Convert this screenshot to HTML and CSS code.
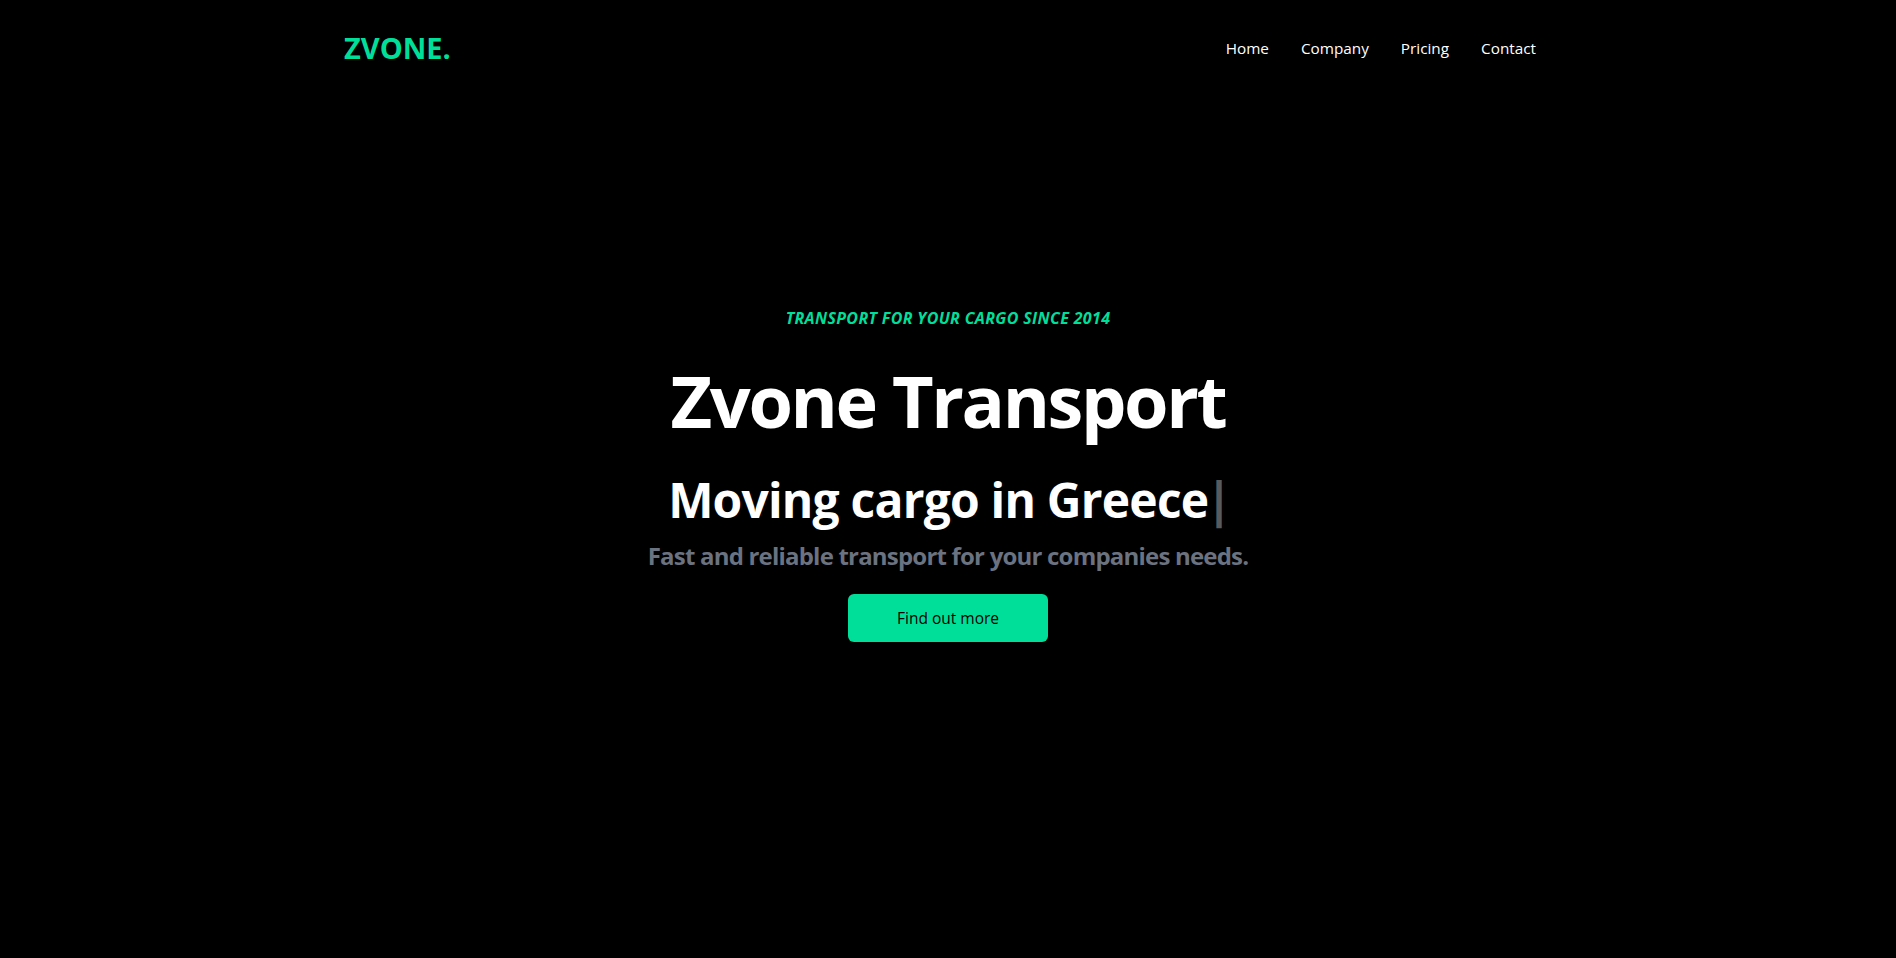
FILE: index.html
```html
<!DOCTYPE html>
<html lang="en">
<head>
<meta charset="utf-8">
<title>Zvone Transport</title>
<link rel="stylesheet" href="styles.css">
</head>
<body>
<header class="navbar">
  <h1 class="logo">ZVONE.</h1>
  <ul class="nav">
    <li class="nav-item">Home</li>
    <li class="nav-item">Company</li>
    <li class="nav-item">Pricing</li>
    <li class="nav-item">Contact</li>
  </ul>
</header>
<main class="hero">
  <div class="hero-inner">
    <p class="tagline">TRANSPORT FOR YOUR CARGO SINCE 2014</p>
    <h1 class="title">Zvone Transport</h1>
    <div class="typed-row">
      <p class="typed">Moving cargo in Greece</p><span class="typed-cursor">|</span>
    </div>
    <p class="subtitle">Fast and reliable transport for your companies needs.</p>
    <button class="cta">Find out more</button>
  </div>
</main>
</body>
</html>
```
FILE: styles.css
```css
* { box-sizing: border-box; margin: 0; padding: 0; }
html, body { background: #000; }
body {
  font-family: "Open Sans", "Noto Sans", sans-serif;
  color: #fff;
  line-height: 1.5;
}
.navbar {
  display: flex;
  justify-content: space-between;
  align-items: center;
  height: 96px;
  max-width: 1240px;
  margin: 0 auto;
  padding: 0 16px;
}
.logo {
  width: 100%;
  font-size: 29px;
  line-height: 36px;
  font-weight: 700;
  color: #00df9a;
}
.nav { display: flex; list-style: none; }
.nav-item { padding: 16px; font-size: 15.3px; line-height: 24px; white-space: nowrap; }
.hero { margin-top: -96px; }
.hero-inner {
  max-width: 800px;
  width: 100%;
  height: 100vh;
  margin: 0 auto;
  padding-top: 6px;
  text-align: center;
  display: flex;
  flex-direction: column;
  justify-content: center;
}
.tagline {
  color: #00df9a;
  font-weight: 700;
  font-style: italic;
  font-size: 16px;
  line-height: 24px;
  letter-spacing: 0.35px;
  padding: 8px;
}
.title {
  font-size: 72px;
  line-height: 1;
  font-weight: 700;
  padding: 26px 0 22px;
  letter-spacing: -2.4px;
}
.typed-row { display: flex; justify-content: center; align-items: center; }
.typed {
  font-size: 48px;
  line-height: 1;
  font-weight: 700;
  letter-spacing: -0.8px;
  padding: 18px 0 14px;
}
.typed-cursor {
  font-family: "DejaVu Sans", sans-serif;
  font-size: 48px;
  line-height: 1;
  font-weight: 700;
  color: #5a5a5a;
  margin-left: 2px;
  transform: translateY(2px);
}
.subtitle {
  font-size: 24px;
  line-height: 32px;
  font-weight: 700;
  color: #6b7280;
  letter-spacing: -0.8px;
  padding-top: 2px;
}
.cta {
  background: #00df9a;
  width: 200px;
  border: 0;
  border-radius: 6px;
  font-family: inherit;
  font-weight: 500;
  font-size: 15.5px;
  line-height: 24px;
  margin: 22px auto 24px;
  padding: 12px 0;
  color: #000;
}
```
